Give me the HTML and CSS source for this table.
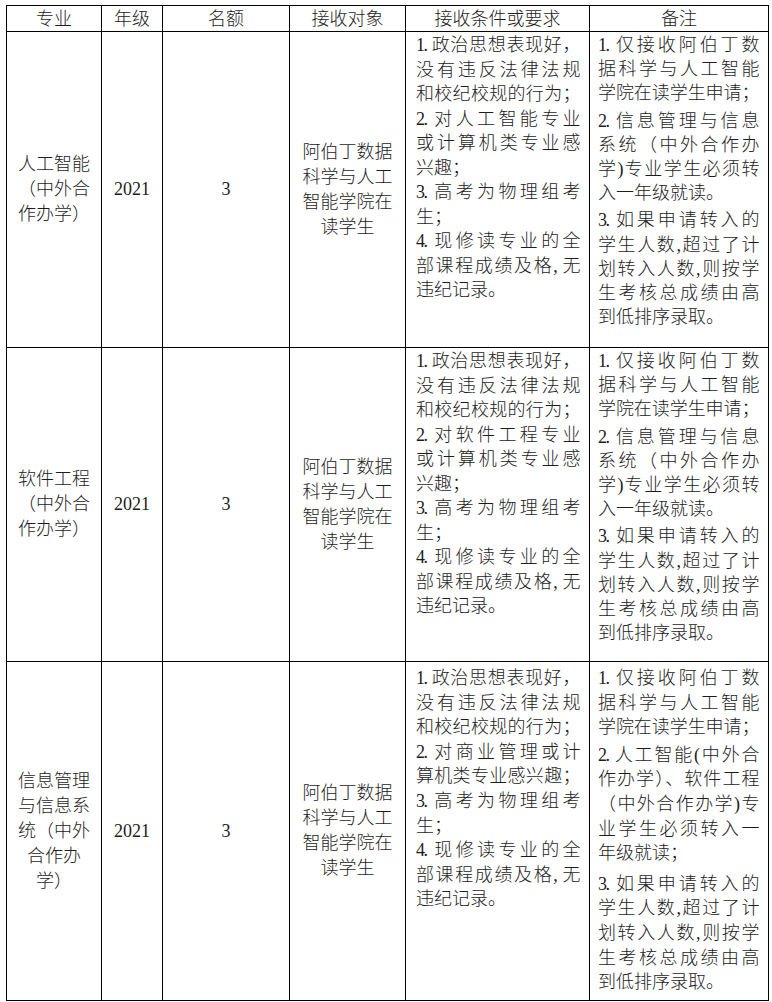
FILE: index.html
```html
<!DOCTYPE html>
<html lang="zh-CN">
<head>
<meta charset="utf-8">
<title>转专业接收计划</title>
<link rel="stylesheet" href="styles.css">
</head>
<body>
<div class="table">
  <div class="cell head">专业</div>
  <div class="cell head">年级</div>
  <div class="cell head">名额</div>
  <div class="cell head">接收对象</div>
  <div class="cell head">接收条件或要求</div>
  <div class="cell head">备注</div>

  <div class="cell mid">人工智能<br>（中外合<br>作办学）</div>
  <div class="cell mid">2021</div>
  <div class="cell mid">3</div>
  <div class="cell mid">阿伯丁数据<br>科学与人工<br>智能学院在<br>读学生</div>
  <div class="cell req">
    <span class="ln">1. 政治思想表现好，</span>
    <span class="ln">没有违反法律法规</span>
    <span class="ln">和校纪校规的行为；</span>
    <span class="ln">2. 对人工智能专业</span>
    <span class="ln">或计算机类专业感</span>
    <span class="ln end">兴趣；</span>
    <span class="ln">3. 高考为物理组考</span>
    <span class="ln end">生；</span>
    <span class="ln">4. 现修读专业的全</span>
    <span class="ln">部课程成绩及格, 无</span>
    <span class="ln end">违纪记录。</span>
  </div>
  <div class="cell note">
    <p class="para">
      <span class="ln">1. 仅接收阿伯丁数</span>
      <span class="ln">据科学与人工智能</span>
      <span class="ln">学院在读学生申请；</span>
    </p>
    <p class="para">
      <span class="ln">2. 信息管理与信息</span>
      <span class="ln">系统（中外合作办</span>
      <span class="ln">学)专业学生必须转</span>
      <span class="ln end">入一年级就读。</span>
    </p>
    <p class="para">
      <span class="ln">3. 如果申请转入的</span>
      <span class="ln">学生人数,超过了计</span>
      <span class="ln">划转入人数,则按学</span>
      <span class="ln">生考核总成绩由高</span>
      <span class="ln end">到低排序录取。</span>
    </p>
  </div>

  <div class="cell mid">软件工程<br>（中外合<br>作办学）</div>
  <div class="cell mid">2021</div>
  <div class="cell mid">3</div>
  <div class="cell mid">阿伯丁数据<br>科学与人工<br>智能学院在<br>读学生</div>
  <div class="cell req">
    <span class="ln">1. 政治思想表现好，</span>
    <span class="ln">没有违反法律法规</span>
    <span class="ln">和校纪校规的行为；</span>
    <span class="ln">2. 对软件工程专业</span>
    <span class="ln">或计算机类专业感</span>
    <span class="ln end">兴趣；</span>
    <span class="ln">3. 高考为物理组考</span>
    <span class="ln end">生；</span>
    <span class="ln">4. 现修读专业的全</span>
    <span class="ln">部课程成绩及格, 无</span>
    <span class="ln end">违纪记录。</span>
  </div>
  <div class="cell note">
    <p class="para">
      <span class="ln">1. 仅接收阿伯丁数</span>
      <span class="ln">据科学与人工智能</span>
      <span class="ln">学院在读学生申请；</span>
    </p>
    <p class="para">
      <span class="ln">2. 信息管理与信息</span>
      <span class="ln">系统（中外合作办</span>
      <span class="ln">学)专业学生必须转</span>
      <span class="ln end">入一年级就读。</span>
    </p>
    <p class="para">
      <span class="ln">3. 如果申请转入的</span>
      <span class="ln">学生人数,超过了计</span>
      <span class="ln">划转入人数,则按学</span>
      <span class="ln">生考核总成绩由高</span>
      <span class="ln end">到低排序录取。</span>
    </p>
  </div>

  <div class="cell mid">信息管理<br>与信息系<br>统（中外<br>合作办<br>学）</div>
  <div class="cell mid">2021</div>
  <div class="cell mid">3</div>
  <div class="cell mid">阿伯丁数据<br>科学与人工<br>智能学院在<br>读学生</div>
  <div class="cell req last">
    <span class="ln">1. 政治思想表现好，</span>
    <span class="ln">没有违反法律法规</span>
    <span class="ln">和校纪校规的行为；</span>
    <span class="ln">2. 对商业管理或计</span>
    <span class="ln">算机类专业感兴趣；</span>
    <span class="ln">3. 高考为物理组考</span>
    <span class="ln end">生；</span>
    <span class="ln">4. 现修读专业的全</span>
    <span class="ln">部课程成绩及格, 无</span>
    <span class="ln end">违纪记录。</span>
  </div>
  <div class="cell note last">
    <p class="para">
      <span class="ln">1. 仅接收阿伯丁数</span>
      <span class="ln">据科学与人工智能</span>
      <span class="ln">学院在读学生申请；</span>
    </p>
    <p class="para">
      <span class="ln">2. 人工智能(中外合</span>
      <span class="ln">作办学）、软件工程</span>
      <span class="ln">（中外合作办学)专</span>
      <span class="ln">业学生必须转入一</span>
      <span class="ln end">年级就读；</span>
    </p>
    <p class="para wide">
      <span class="ln">3. 如果申请转入的</span>
      <span class="ln">学生人数,超过了计</span>
      <span class="ln">划转入人数,则按学</span>
      <span class="ln">生考核总成绩由高</span>
      <span class="ln end">到低排序录取。</span>
    </p>
  </div>
</div>
</body>
</html>
```

FILE: styles.css
```css
html, body {
  margin: 0;
  padding: 0;
  background: #ffffff;
}

body {
  font-family: "Liberation Serif", "Noto Sans CJK SC", serif;
  font-size: 18px;
  color: #1c1c1c;
}

.table {
  display: grid;
  grid-template-columns: 95px 61px 127px 116px 184px 179px;
  grid-template-rows: 26px 316px 314px 339px;
  width: max-content;
  margin: 5px 0 0 6px;
  border-top: 1px solid #000;
  border-left: 1px solid #000;
}

.cell {
  box-sizing: border-box;
  border-right: 1px solid #000;
  border-bottom: 1px solid #000;
  line-height: 25px;
  font-weight: 300;
}

.head {
  display: flex;
  align-items: center;
  justify-content: center;
  line-height: 24px;
}

.mid {
  display: flex;
  align-items: center;
  justify-content: center;
  text-align: center;
}

.req {
  padding: 1px 10px 0 10px;
  line-height: 24.5px;
}

.note {
  padding: 1px 10px 0 8px;
  line-height: 24.2px;
}

.req.last,
.note.last {
  padding-top: 4px;
  line-height: 24.6px;
}

.para {
  margin: 0;
}

.para + .para {
  margin-top: 3px;
}

.para.wide {
  margin-top: 6px;
}

.ln {
  display: block;
  text-align: justify;
  text-align-last: justify;
  letter-spacing: -1.5px;
}

.ln.end {
  text-align-last: left;
  letter-spacing: 0;
}
```
